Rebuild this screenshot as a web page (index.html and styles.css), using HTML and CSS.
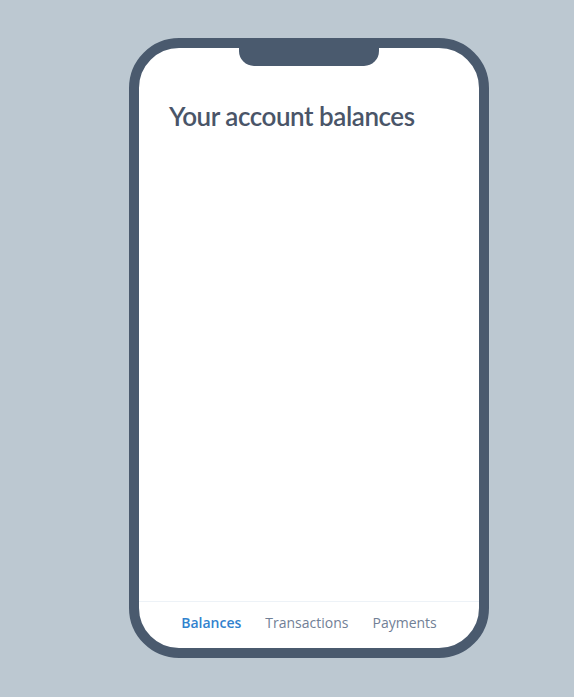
FILE: index.html
```html
<!DOCTYPE html>
<html>
<head>
<meta charset="utf-8">
<link rel="stylesheet" href="styles.css">
</head>
<body>
<div class="stage">
  <div class="phone">
    <div class="notch"></div>
    <h1 class="title">Your account balances</h1>
    <div class="content"></div>
    <nav class="tabs">
      <span class="tab active">Balances</span>
      <span class="tab">Transactions</span>
      <span class="tab">Payments</span>
    </nav>
  </div>
</div>
</body>
</html>
```
FILE: styles.css
```css
html, body {
  margin: 0;
  padding: 0;
  background: #bcc8d1;
  height: 100%;
}
.stage {
  padding: 38px 0 0 129px;
}
.phone {
  position: relative;
  width: 340px;
  height: 600px;
  border: 10px solid #4a5a6e;
  border-radius: 50px;
  background: #ffffff;
  overflow: hidden;
  display: flex;
  flex-direction: column;
}
.notch {
  position: absolute;
  left: 100px;
  top: 0;
  width: 140px;
  height: 18px;
  background: #4a5a6e;
  border-radius: 0 0 15px 15px;
}
.title {
  margin: 0;
  padding: 50px 30px 0 30px;
  font-family: "Lato", sans-serif;
  font-weight: 600;
  font-size: 26px;
  letter-spacing: -0.45px;
  line-height: 36px;
  color: #4a5568;
}
.content {
  flex: 1;
}
.tabs {
  height: 47px;
  box-sizing: border-box;
  padding-bottom: 6px;
  border-top: 1px solid #edf2f7;
  display: flex;
  justify-content: center;
  align-items: center;
  gap: 24px;
  font-family: "Open Sans", sans-serif;
  font-size: 14px;
}
.tab {
  color: #718096;
}
.tab.active {
  color: #3182ce;
  font-weight: 600;
}
```
